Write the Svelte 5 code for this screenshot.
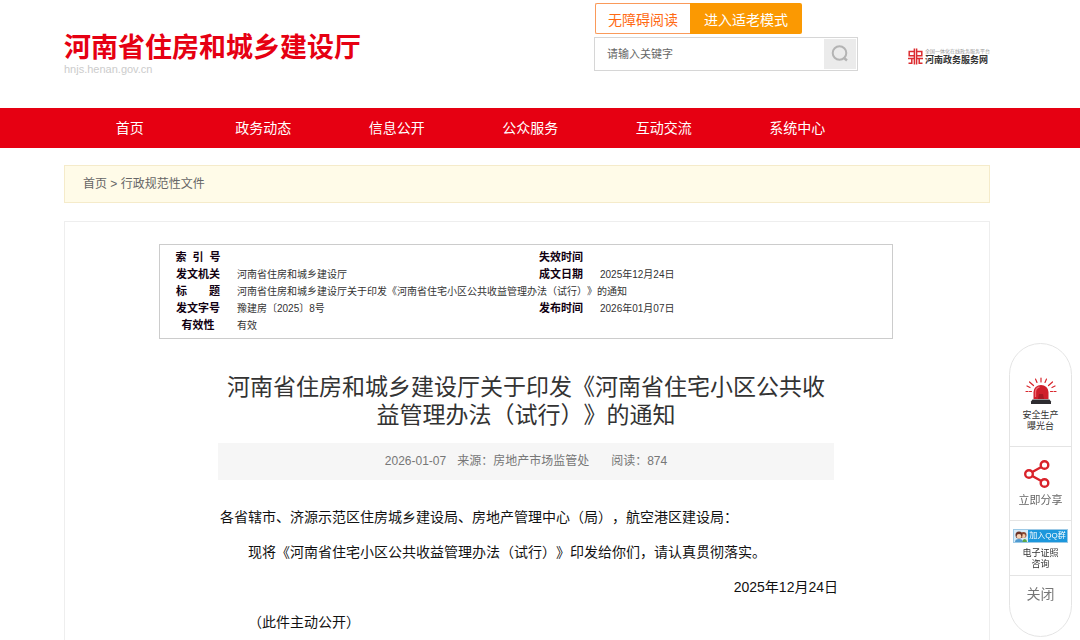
<script lang="ts">
  const navItems = ['首页', '政务动态', '信息公开', '公众服务', '互动交流', '系统中心'];

  let keyword = $state('');
  let toolbarOpen = $state(true);

  function handleSearch(e: Event) {
    e.preventDefault();
  }
</script>

<header class="header">
  <div class="brand">
    <h1>河南省住房和城乡建设厅</h1>
    <p>hnjs.henan.gov.cn</p>
  </div>

  <div class="tools">
    <div class="modes">
      <button type="button" class="mode">无障碍阅读</button>
      <button type="button" class="mode elder">进入适老模式</button>
    </div>
    <form class="search" onsubmit={handleSearch}>
      <input type="text" placeholder="请输入关键字" aria-label="请输入关键字" bind:value={keyword}>
      <button type="submit" aria-label="搜索">
        <svg viewBox="0 0 18 18" width="18" height="18" fill="none" stroke="#b4b4b4" stroke-width="2">
          <circle cx="8.5" cy="8" r="6.8" />
          <path d="M12.5 12.5l3.5 3" stroke-width="2.4" />
        </svg>
      </button>
    </form>
  </div>

  <a class="service" href="#service">
    <svg viewBox="0 0 15 17" width="15" height="17" fill="none" stroke="#dc2c30" stroke-width="1.5">
      <path d="M6.4 0.500v16M8.600 0.500v16" />
      <path d="M6 3.500H1.200v4.200H6M9 3.500h4.800v4.200H9" />
      <path d="M0 10.500h6M3.800 10.500v4.700H0.500M15 10.500H9M11.200 10.500v4.700h3.300" />
    </svg>
    <span class="service-text">
      <small>全国一体化在线政务服务平台</small>
      <strong>河南政务服务网</strong>
    </span>
  </a>
</header>

<nav class="nav">
  <ul>
    {#each navItems as item}
      <li><a href="#nav">{item}</a></li>
    {/each}
  </ul>
</nav>

<main class="page">
  <div class="breadcrumb">
    <a href="#home">首页</a> &gt; <a href="#files">行政规范性文件</a>
  </div>

  <article class="article">
    <div class="info">
      <table>
        <colgroup>
          <col class="col-label">
          <col class="col-value">
          <col class="col-label">
          <col>
        </colgroup>
        <tbody>
          <tr><th scope="row">索&nbsp; 引&nbsp; 号</th><td></td><th scope="row">失效时间</th><td></td></tr>
          <tr><th scope="row">发文机关</th><td>河南省住房和城乡建设厅</td><th scope="row">成文日期</th><td>2025年12月24日</td></tr>
          <tr><th scope="row">标　　题</th><td colspan="3">河南省住房和城乡建设厅关于印发《河南省住宅小区公共收益管理办法（试行）》的通知</td></tr>
          <tr><th scope="row">发文字号</th><td>豫建房〔2025〕8号</td><th scope="row">发布时间</th><td>2026年01月07日</td></tr>
          <tr><th scope="row">有效性</th><td>有效</td><td></td><td></td></tr>
        </tbody>
      </table>
    </div>

    <div class="content">
      <h2>河南省住房和城乡建设厅关于印发《河南省住宅小区公共收益管理办法（试行）》的通知</h2>
      <div class="meta">
        <span>2026-01-07</span>
        <span>来源：房地产市场监管处</span>
        <span class="reads">阅读：874</span>
      </div>
      <div class="body">
        <p>各省辖市、济源示范区住房城乡建设局、房地产管理中心（局），航空港区建设局：</p>
        <p class="indent">现将《河南省住宅小区公共收益管理办法（试行）》印发给你们，请认真贯彻落实。</p>
        <p class="date">2025年12月24日</p>
        <p class="indent">（此件主动公开）</p>
      </div>
    </div>
  </article>
</main>

{#if toolbarOpen}
  <aside class="toolbar">
    <a class="tool alarm" href="#report">
      <svg viewBox="0 0 32 28" width="32" height="28">
        <g stroke="#d8262c" stroke-width="1.2" stroke-linecap="round">
          <path d="M16 1v4M10.500 2l1.500 3.500M21.500 2L20 5.500M4.500 5l4 3.500M27.500 5l-4 3.500M2 9l3 1.500M30 9l-3 1.500M1 14.500h2M4.500 14.500h2M25.500 14.500h2M29 14.500h2" />
        </g>
        <path d="M8.500 22v-7a7.500 7 0 0 1 15 0v7z" fill="#cf1f2b" />
        <path d="M10.500 20v-5q0-4 4-5" fill="none" stroke="#ee6a70" stroke-width="1.3" />
        <path d="M14 17h4l1 5h-6z" fill="#a81822" />
        <path d="M7.500 22.500h17l1.500 2v2.500H6v-2.500z" fill="#2d2b30" />
      </svg>
      <span>安全生产<br>曝光台</span>
    </a>
    <button type="button" class="tool share">
      <svg viewBox="0 0 34 28" width="34" height="28" fill="none" stroke="#d9232b" stroke-width="2.4">
        <circle cx="5" cy="14" r="3.8" />
        <circle cx="20.500" cy="5" r="3.8" />
        <circle cx="20.500" cy="23" r="3.8" />
        <path d="M8.300 12l9-5M8.300 16l9 5" />
      </svg>
      <span>立即分享</span>
    </button>
    <a class="tool qq" href="#qq">
      <span class="badge">
        <svg viewBox="0 0 14 12" width="14" height="12">
          <rect width="14" height="12" fill="#d5eaf7" />
          <circle cx="9.500" cy="5" r="3" fill="#8a4a32" />
          <circle cx="9.500" cy="6" r="2" fill="#f3c9a8" />
          <circle cx="5" cy="5" r="3.500" fill="#6b3326" />
          <circle cx="5" cy="6.200" r="2.300" fill="#f7d3b5" />
          <path d="M1 12q0-3 4-3t4 3z" fill="#4f9ad0" />
          <path d="M8.500 12q0-3 2.500-3 2 .5 2 3z" fill="#58a848" />
        </svg>
        <b>加入QQ群</b>
      </span>
      <span>电子证照<br>咨询</span>
    </a>
    <button type="button" class="tool close" onclick={() => (toolbarOpen = false)}>关闭</button>
  </aside>
{/if}

<style>
  :global(body) {
    background: #fff;
    color: #111;
    font-family: "Liberation Sans", "Noto Sans CJK SC", sans-serif;
    font-size: 14px;
    text-spacing-trim: space-all;
  }

  a {
    color: inherit;
    text-decoration: none;
  }

  button,
  input {
    margin: 0;
    padding: 0;
    font: inherit;
    cursor: pointer;
  }

  .header {
    display: grid;
    grid-template-columns: 530fr 264px 132fr;
    align-items: start;
    box-sizing: border-box;
    height: 108px;
    padding: 3px 90px 0 64px;
  }

  .brand h1 {
    margin: 29px 0 0;
    color: #e60012;
    font-size: 27px;
    line-height: 32px;
  }

  .brand p {
    margin: 0;
    color: #ccc;
    font-size: 11px;
    line-height: 10px;
  }

  .modes {
    display: flex;
    margin-left: 1px;
  }

  .mode {
    box-sizing: border-box;
    height: 31px;
    padding: 0 12px;
    border: 1px solid #fa9a5a;
    border-right: 0;
    border-radius: 2px 0 0 2px;
    background: #fff;
    color: #ff6a13;
  }

  .mode.elder {
    padding: 0 14px;
    border: 0;
    border-radius: 0 2px 2px 0;
    background: #fb9902;
    color: #fff;
  }

  .search {
    display: flex;
    box-sizing: border-box;
    height: 34px;
    margin-top: 3px;
    padding: 1px;
    border: 1px solid #d6d6d6;
  }

  .search input {
    flex: 1;
    min-width: 0;
    padding: 0 11px;
    border: 0;
    outline: none;
    font-size: 11px;
    cursor: text;
  }

  .search input::placeholder {
    color: #666;
  }

  .search button {
    display: grid;
    place-items: center;
    width: 32px;
    border: 0;
    background: #ebebeb;
  }

  .service {
    display: flex;
    justify-self: end;
    gap: 2px;
    margin-top: 45px;
  }

  .service-text {
    display: flex;
    flex-direction: column;
    white-space: nowrap;
  }

  .service small {
    color: #999;
    font-size: 5px;
    line-height: 6px;
  }

  .service strong {
    color: #333;
    font-size: 9px;
    line-height: 12px;
  }

  .nav {
    background: #e60012;
  }

  .nav ul {
    display: flex;
    margin: 0;
    padding: 0 216px 0 63px;
    list-style: none;
  }

  .nav li {
    flex: 1;
    text-align: center;
  }

  .nav a {
    display: block;
    color: #fff;
    line-height: 40px;
  }

  .page {
    padding: 17px 90px 0 64px;
  }

  .breadcrumb {
    padding: 0 18px;
    border: 1px solid #f5ebca;
    background: #fffbe8;
    color: #666;
    font-size: 12px;
    line-height: 36px;
  }

  .article {
    margin-top: 18px;
    padding: 22px 96px 40px 94px;
    border: 1px solid #eee;
  }

  .info {
    padding: 4px 8px;
    border: 1px solid #ccc;
  }

  .info table {
    width: 100%;
    border-collapse: collapse;
    table-layout: fixed;
  }

  .col-label {
    width: 60px;
  }

  .col-value {
    width: 303px;
  }

  .info th,
  .info td {
    height: 17px;
    padding: 0;
    line-height: 17px;
    white-space: nowrap;
  }

  .info th {
    font-size: 11px;
    color: #101;
  }

  .info td {
    padding-left: 9px;
    color: #333;
    font-size: 10px;
  }

  .content {
    max-width: 616px;
    margin: 0 auto;
  }

  .content h2 {
    margin: 34px 0 14px;
    color: #333;
    font-size: 23px;
    font-weight: 400;
    line-height: 28px;
    text-align: center;
  }

  .meta {
    display: flex;
    justify-content: center;
    gap: 11px;
    background: #f6f6f6;
    color: #777;
    font-size: 12px;
    line-height: 37px;
  }

  .reads {
    margin-left: 11px;
  }

  .body {
    margin: 0 -4px 0 2px;
    padding-top: 20px;
  }

  .body p {
    margin: 0;
    line-height: 35px;
  }

  .body .indent {
    text-indent: 2em;
  }

  .body .date {
    text-align: right;
  }

  .toolbar {
    position: fixed;
    top: 343px;
    right: 8px;
    box-sizing: border-box;
    width: 63px;
    border: 1px solid #e4e4e4;
    border-radius: 32px;
    background: #fff;
    overflow: hidden;
  }

  .tool {
    display: flex;
    flex-direction: column;
    align-items: center;
    box-sizing: border-box;
    width: 100%;
    border: 0;
    border-bottom: 1px solid #e4e4e4;
    background: none;
    color: #333;
    font-size: 9px;
    line-height: 11px;
    text-align: center;
  }

  .alarm {
    gap: 5px;
    padding: 33px 0 14px;
  }

  .share {
    gap: 6px;
    padding: 13px 0 14px;
    color: #666;
    font-size: 11px;
    line-height: 12px;
  }

  .qq {
    gap: 5px;
    padding: 8px 0 5px;
  }

  .badge {
    display: flex;
    border: 1px solid #9cc9e6;
    background: #1c97dc;
    color: #fff;
    line-height: 12px;
  }

  .badge b {
    padding: 0 1px;
    font-size: 8px;
    font-weight: 400;
  }

  .close {
    padding: 8px 0 32px;
    border-bottom: 0;
    color: #777;
    font-size: 14px;
    line-height: 20px;
  }
</style>
